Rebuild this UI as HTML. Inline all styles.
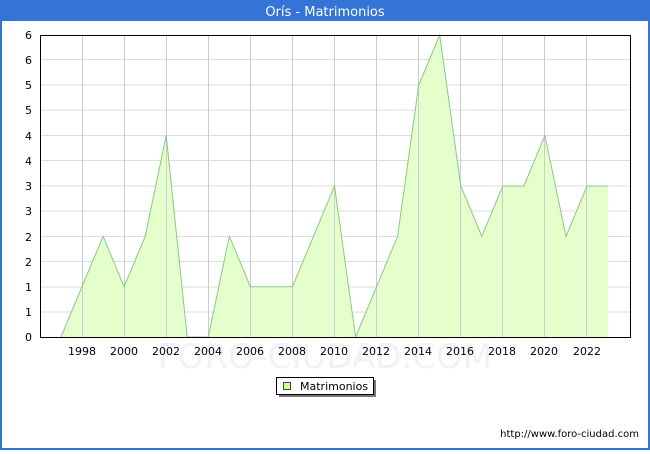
<!DOCTYPE html>
<html><head><meta charset="utf-8"><style>
body{margin:0;width:650px;height:450px;overflow:hidden;font-family:"DejaVu Sans","Liberation Sans",sans-serif;}
</style></head><body>
<svg width="650" height="450" xmlns="http://www.w3.org/2000/svg" font-family="DejaVu Sans, Liberation Sans, sans-serif">
<rect x="0" y="0" width="650" height="450" fill="#3474d6"/>
<rect x="2" y="21" width="646" height="427" fill="#fff"/>
<text x="325" y="16" fill="#fff" font-size="13" text-anchor="middle">Orís - Matrimonios</text>
<g stroke="#dcdcdc" stroke-width="1">
<line x1="41" y1="59.5" x2="630" y2="59.5"/><line x1="41" y1="85" x2="630" y2="85"/><line x1="41" y1="110" x2="630" y2="110"/><line x1="41" y1="135.5" x2="630" y2="135.5"/><line x1="41" y1="160.5" x2="630" y2="160.5"/><line x1="41" y1="186" x2="630" y2="186"/><line x1="41" y1="211" x2="630" y2="211"/><line x1="41" y1="236.5" x2="630" y2="236.5"/><line x1="41" y1="261.5" x2="630" y2="261.5"/><line x1="41" y1="287" x2="630" y2="287"/><line x1="41" y1="312" x2="630" y2="312"/>
</g>
<polygon fill="#e4ffcc" points="61,337 82,286.7 103.1,236.3 124.1,286.7 145.2,236.3 166.2,135.7 187.2,337 208.3,337 229.3,236.3 250.4,286.7 271.4,286.7 292.4,286.7 313.5,236.3 334.5,186 355.6,337 376.6,286.7 397.6,236.3 418.7,85.3 439.7,35 460.8,186 481.8,236.3 502.8,186 523.9,186 544.9,135.7 566,236.3 587,186 608,186 608,337"/>
<g stroke="#cccccc" stroke-width="1">
<line x1="82.5" y1="35" x2="82.5" y2="337"/><line x1="124.5" y1="35" x2="124.5" y2="337"/><line x1="166.5" y1="35" x2="166.5" y2="337"/><line x1="208.5" y1="35" x2="208.5" y2="337"/><line x1="250.5" y1="35" x2="250.5" y2="337"/><line x1="292.5" y1="35" x2="292.5" y2="337"/><line x1="334.5" y1="35" x2="334.5" y2="337"/><line x1="376.5" y1="35" x2="376.5" y2="337"/><line x1="418.5" y1="35" x2="418.5" y2="337"/><line x1="460.5" y1="35" x2="460.5" y2="337"/><line x1="502.5" y1="35" x2="502.5" y2="337"/><line x1="544.5" y1="35" x2="544.5" y2="337"/><line x1="586.5" y1="35" x2="586.5" y2="337"/>
</g>
<polyline fill="none" stroke="#88c888" stroke-width="1" points="61,337 82,286.7 103.1,236.3 124.1,286.7 145.2,236.3 166.2,135.7 187.2,337 208.3,337 229.3,236.3 250.4,286.7 271.4,286.7 292.4,286.7 313.5,236.3 334.5,186 355.6,337 376.6,286.7 397.6,236.3 418.7,85.3 439.7,35 460.8,186 481.8,236.3 502.8,186 523.9,186 544.9,135.7 566,236.3 587,186 608,186"/>
<rect x="40.5" y="35.5" width="590" height="302" fill="none" stroke="#000" stroke-width="1"/>
<text x="325" y="368" font-size="34" fill="#eef0f8" text-anchor="middle" opacity="0.8">FORO-CIUDAD.COM</text>
<g font-size="11" fill="#000" text-anchor="end">
<text x="32" y="39">6</text><text x="32" y="64">6</text><text x="32" y="89">5</text><text x="32" y="114">5</text><text x="32" y="140">4</text><text x="32" y="165">4</text><text x="32" y="190">3</text><text x="32" y="215">3</text><text x="32" y="241">2</text><text x="32" y="266">2</text><text x="32" y="291">1</text><text x="32" y="316">1</text><text x="32" y="341">0</text>
</g>
<g font-size="11" fill="#000" text-anchor="middle">
<text x="82" y="355">1998</text><text x="124" y="355">2000</text><text x="166" y="355">2002</text><text x="208" y="355">2004</text><text x="250" y="355">2006</text><text x="292" y="355">2008</text><text x="334" y="355">2010</text><text x="376" y="355">2012</text><text x="418" y="355">2014</text><text x="460" y="355">2016</text><text x="502" y="355">2018</text><text x="544" y="355">2020</text><text x="587" y="355">2022</text>
</g>
<rect x="279" y="380" width="97" height="17" fill="#777"/>
<rect x="276.5" y="377.5" width="97" height="17" fill="#fff" stroke="#000"/>
<rect x="283.5" y="382.5" width="7" height="7" fill="#ccff99" stroke="#444"/>
<text x="300" y="390" font-size="11">Matrimonios</text>
<text x="639" y="437" font-size="10" text-anchor="end">http://www.foro-ciudad.com</text>
</svg>
</body></html>
